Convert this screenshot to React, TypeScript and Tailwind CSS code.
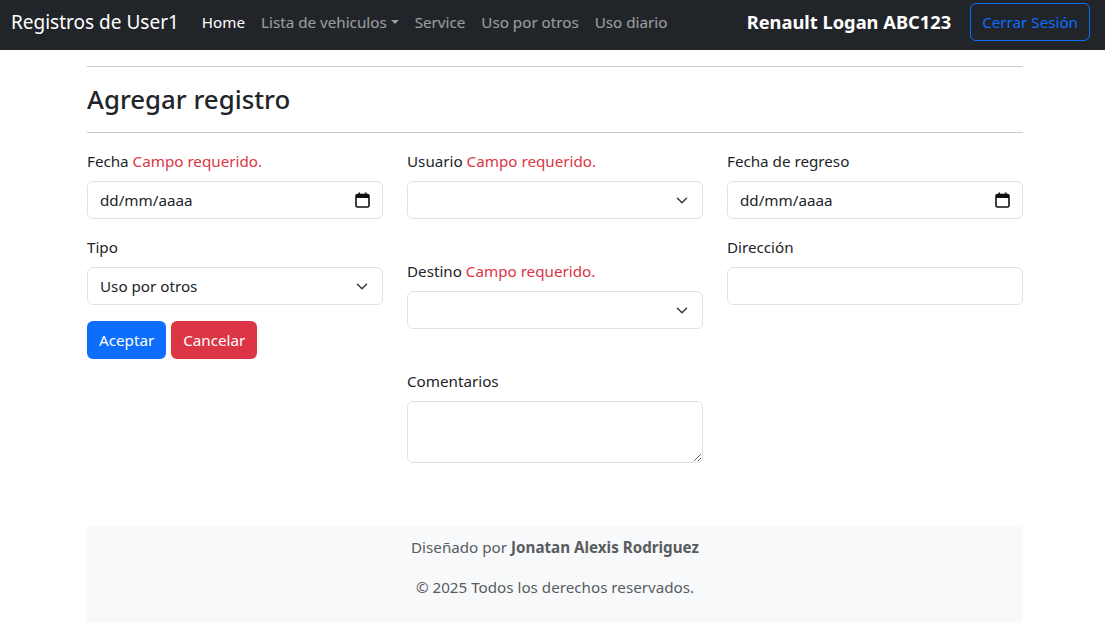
import React from 'react';

const Chevron: React.FC = () => (
    <svg width="12" height="9" viewBox="0 0 16 12" className="shrink-0 mr-[2px]">
        <path d="M2 3l6 6 6-6" fill="none" stroke="#343a40" strokeWidth="2" strokeLinecap="round" strokeLinejoin="round" />
    </svg>
);

const CalendarIcon: React.FC = () => (
    <svg width="15" height="16" viewBox="0 0 15 16" className="shrink-0">
        <rect x="1" y="2.5" width="13" height="12.5" rx="1.5" fill="none" stroke="#111" strokeWidth="1.6" />
        <rect x="1" y="2.5" width="13" height="3.5" fill="#111" />
        <rect x="3.5" y="0.5" width="1.6" height="3" fill="#111" />
        <rect x="9.9" y="0.5" width="1.6" height="3" fill="#111" />
    </svg>
);

const Label: React.FC<{ text: string; required?: boolean }> = ({ text, required }) => (
    <div className="mb-2 leading-6">
        {text}
        {required && <span className="text-[#dc3545]"> Campo requerido.</span>}
    </div>
);

const DateField: React.FC = () => (
    <div className="h-[38px] flex items-center justify-between px-3 border border-[#dee2e6] rounded-md bg-white">
        <span>dd/mm/aaaa</span>
        <CalendarIcon />
    </div>
);

const SelectField: React.FC<{ value?: string }> = ({ value }) => (
    <div className="h-[38px] flex items-center justify-between px-3 border border-[#dee2e6] rounded-md bg-white">
        <span>{value}</span>
        <Chevron />
    </div>
);

export default function App() {
    return (
        <div className="min-h-screen bg-white text-[#212529] text-[15.2px] leading-6" style={{ fontFamily: '"Noto Sans", "Open Sans", sans-serif' }}>
            <nav className="bg-[#212529] h-[50px] pt-[3px] pb-[9px] pl-[11px] pr-[15px] flex items-center">
                <span className="text-white text-[19px] leading-[30px] mr-[15px]">Registros de User1</span>
                <div className="flex items-center">
                    <span className="px-2 text-white">Home</span>
                    <span className="px-2 text-white/55 flex items-center">
                        Lista de vehiculos
                        <span className="ml-[4px] inline-block w-0 h-0 border-x-[4px] border-x-transparent border-t-[4px] border-t-white/55" />
                    </span>
                    <span className="px-2 text-white/55">Service</span>
                    <span className="px-2 text-white/55">Uso por otros</span>
                    <span className="px-2 text-white/55">Uso diario</span>
                </div>
                <div className="ml-auto flex items-center gap-[19px]">
                    <span className="text-white text-[18.3px] font-bold">Renault Logan ABC123</span>
                    <button className="h-[38px] px-[11px] border border-[#0d6efd] text-[#0d6efd] rounded-md">Cerrar Sesión</button>
                </div>
            </nav>

            <main className="w-[936px] ml-[87px]">
                <hr className="mt-4 border-t border-[#c8c9ca]" />
                <h3 className="text-[25.8px] font-medium leading-[33px] pt-4 pb-4">Agregar registro</h3>
                <hr className="border-t border-[#c8c9ca]" />

                <form className="grid grid-cols-3 gap-x-6 pt-4">
                    <div>
                        <div className="mb-4">
                            <Label text="Fecha" required />
                            <DateField />
                        </div>
                        <div className="mb-4">
                            <Label text="Tipo" />
                            <SelectField value="Uso por otros" />
                        </div>
                        <div className="flex gap-[5px]">
                            <button type="button" className="h-[38px] px-3 rounded-md bg-[#0d6efd] text-white">Aceptar</button>
                            <button type="button" className="h-[38px] px-3 rounded-md bg-[#dc3545] text-white">Cancelar</button>
                        </div>
                    </div>
                    <div>
                        <div className="mb-10">
                            <Label text="Usuario" required />
                            <SelectField />
                        </div>
                        <div className="mb-10">
                            <Label text="Destino" required />
                            <SelectField />
                        </div>
                        <div className="mb-4">
                            <Label text="Comentarios" />
                            <textarea rows={2} className="block w-full h-[62px] px-3 py-1.5 border border-[#dee2e6] rounded-md resize-y" />
                        </div>
                    </div>
                    <div>
                        <div className="mb-4">
                            <Label text="Fecha de regreso" />
                            <DateField />
                        </div>
                        <div className="mb-4">
                            <Label text="Dirección" />
                            <div className="h-[38px] border border-[#dee2e6] rounded-md bg-white" />
                        </div>
                    </div>
                </form>

                <footer className="mt-12 bg-[#f8f9fa] pt-2 pb-2 text-center text-[#595c5f]">
                    <p className="mb-4 leading-6">Diseñado por <strong className="font-bold">Jonatan Alexis Rodriguez</strong></p>
                    <p className="mb-4 leading-6">© 2025 Todos los derechos reservados.</p>
                </footer>
            </main>
        </div>
    );
}
